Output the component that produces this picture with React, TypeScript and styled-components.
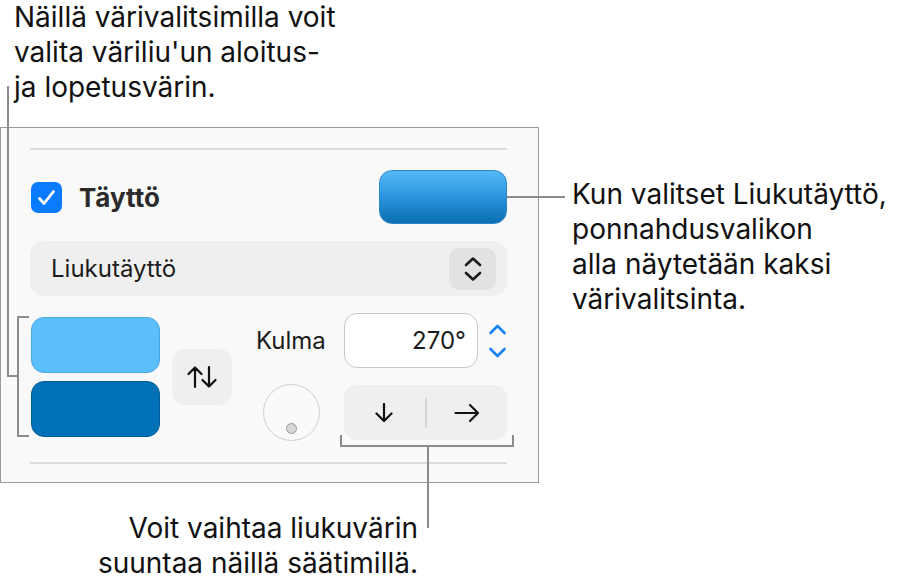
import type { ReactElement } from "react";
import styled, { createGlobalStyle } from "styled-components";

const LEADER = "#8c8c8c";

const GlobalStyle = createGlobalStyle`
  html, body {
    margin: 0;
    padding: 0;
    background: #ffffff;
  }
  body {
    font-family: Inter, "Liberation Sans", sans-serif;
    color: #111111;
  }
`;

export default function App(): ReactElement {
  return (
    <Page>
      <GlobalStyle />
      <TopNote>
        Näillä värivalitsimilla voit
        <br />
        valita väriliu'un aloitus-
        <br />
        ja lopetusvärin.
      </TopNote>
      <MainRow>
        <Panel>
          <Separator />
          <FillRow>
            <CheckLabel>
              <Checkbox>
                <svg width="31" height="31" viewBox="0 0 31 31">
                  <path
                    d="M8.5 16.5 L13 21.5 L22.5 9.5"
                    fill="none"
                    stroke="#ffffff"
                    strokeWidth="2.8"
                    strokeLinecap="round"
                    strokeLinejoin="round"
                  />
                </svg>
              </Checkbox>
              <FillTitle>Täyttö</FillTitle>
            </CheckLabel>
            <GradientSwatch />
          </FillRow>
          <Popup>
            <PopupText>Liukutäyttö</PopupText>
            <PopupStepper>
              <svg width="20" height="28" viewBox="0 0 20 28">
                <path
                  d="M3 10 L10 3.5 L17 10 M3 18 L10 24.5 L17 18"
                  fill="none"
                  stroke="#1c1c1c"
                  strokeWidth="2.6"
                  strokeLinecap="round"
                  strokeLinejoin="round"
                />
              </svg>
            </PopupStepper>
          </Popup>
          <Controls>
            <Wells>
              <Well $fill="#5bbffd" $edge="#48a7e2" />
              <Well $fill="#0071b6" $edge="#005c96" />
            </Wells>
            <SwapButton>
              <svg width="30" height="24" viewBox="0 0 30 24">
                <path
                  d="M8 22 V2.5 M1.5 9 L8 2.5 L14.5 9 M22 2 V21.5 M15.5 15 L22 21.5 L28.5 15"
                  fill="none"
                  stroke="#111111"
                  strokeWidth="2.2"
                  strokeLinecap="round"
                  strokeLinejoin="round"
                />
              </svg>
            </SwapButton>
            <AngleGrid>
              <AngleLabel>Kulma</AngleLabel>
              <AngleField>
                <AngleInput>270°</AngleInput>
                <BlueStepper>
                  <svg width="19" height="36" viewBox="0 0 19 36">
                    <path
                      d="M2.5 10 L9.5 3 L16.5 10 M2.5 26 L9.5 33 L16.5 26"
                      fill="none"
                      stroke="#1a82f7"
                      strokeWidth="2.6"
                      strokeLinecap="round"
                      strokeLinejoin="round"
                    />
                  </svg>
                </BlueStepper>
              </AngleField>
              <Knob>
                <KnobDot />
              </Knob>
              <Segmented>
                <Segment>
                  <svg width="22" height="20" viewBox="0 0 22 20">
                    <path
                      d="M11 1 V18 M3.5 10.5 L11 18 L18.5 10.5"
                      fill="none"
                      stroke="#111111"
                      strokeWidth="2.2"
                      strokeLinecap="round"
                      strokeLinejoin="round"
                    />
                  </svg>
                </Segment>
                <SegmentDivider />
                <Segment>
                  <svg width="26" height="20" viewBox="0 0 26 20">
                    <path
                      d="M1.5 10 H24 M16 2 L24 10 L16 18"
                      fill="none"
                      stroke="#111111"
                      strokeWidth="2.2"
                      strokeLinecap="round"
                      strokeLinejoin="round"
                    />
                  </svg>
                </Segment>
              </Segmented>
            </AngleGrid>
          </Controls>
          <Separator $gap={22} />
        </Panel>
        <SideNote>
          Kun valitset Liukutäyttö,
          <br />
          ponnahdusvalikon
          <br />
          alla näytetään kaksi
          <br />
          värivalitsinta.
        </SideNote>
      </MainRow>
      <BottomNote>
        Voit vaihtaa liukuvärin
        <br />
        suuntaa näillä säätimillä.
      </BottomNote>

      {/* leader lines and brackets */}
      <Leader style={{ left: 7, top: 86, width: 2, height: 291 }} />
      <Leader style={{ left: 7, top: 375, width: 12, height: 2 }} />
      <Leader style={{ left: 17, top: 316, width: 2, height: 121 }} />
      <Leader style={{ left: 17, top: 316, width: 12, height: 2 }} />
      <Leader style={{ left: 17, top: 435, width: 12, height: 2 }} />
      <Leader style={{ left: 507, top: 196, width: 58, height: 2 }} />
      <Leader style={{ left: 340, top: 445, width: 174, height: 2 }} />
      <Leader style={{ left: 340, top: 435, width: 2, height: 12 }} />
      <Leader style={{ left: 512, top: 435, width: 2, height: 12 }} />
      <Leader style={{ left: 427, top: 446, width: 2, height: 82 }} />
    </Page>
  );
}

const Page = styled.div`
  position: relative;
  width: 897px;
  height: 587px;
  overflow: hidden;
  background: #ffffff;
`;

const Note = styled.div`
  font-size: 28px;
  line-height: 35px;
  color: #111111;
`;

const TopNote = styled(Note)`
  margin-left: 14px;
`;

const MainRow = styled.div`
  display: flex;
  align-items: flex-start;
  margin-top: 22px;
`;

const Panel = styled.div`
  box-sizing: border-box;
  width: 539px;
  border: 1.5px solid #9a9a9a;
  background: #f9f9f9;
  padding: 20px 31px 18px 29px;
  display: flex;
  flex-direction: column;
`;

const Separator = styled.div<{ $gap?: number }>`
  height: 2px;
  margin-top: ${(p) => p.$gap ?? 0}px;
  background: #dcdcdc;
`;

const FillRow = styled.div`
  display: flex;
  align-items: center;
  justify-content: space-between;
  margin-top: 20px;
`;

const CheckLabel = styled.div`
  display: flex;
  align-items: center;
  gap: 17px;
  padding-left: 1px;
`;

const Checkbox = styled.div`
  width: 31px;
  height: 31px;
  border-radius: 7px;
  background: #0a7aff;
  display: flex;
  align-items: center;
  justify-content: center;
`;

const FillTitle = styled.span`
  font-size: 26px;
  font-weight: 700;
  color: #2b2b2b;
`;

const GradientSwatch = styled.div`
  box-sizing: border-box;
  width: 128px;
  height: 54px;
  border-radius: 13px;
  border: 1px solid #2d86c6;
  background: linear-gradient(180deg, #55b9f8 0%, #2a94dc 50%, #0a6fb2 100%);
`;

const Popup = styled.div`
  height: 55px;
  margin-top: 17px;
  border-radius: 14px;
  background: #efefef;
  display: flex;
  align-items: center;
  justify-content: space-between;
  padding: 0 11px 0 21px;
`;

const PopupText = styled.span`
  font-size: 24px;
  color: #1c1c1c;
`;

const PopupStepper = styled.div`
  width: 47px;
  height: 42px;
  border-radius: 10px;
  background: #e2e2e2;
  display: flex;
  align-items: center;
  justify-content: center;
`;

const Controls = styled.div`
  display: flex;
  align-items: center;
  margin-top: 17px;
`;

const Wells = styled.div`
  display: flex;
  flex-direction: column;
  gap: 8px;
  margin-left: 1px;
`;

const Well = styled.div<{ $fill: string; $edge: string }>`
  box-sizing: border-box;
  width: 129px;
  height: 56px;
  border-radius: 13px;
  background: ${(p) => p.$fill};
  border: 1.5px solid ${(p) => p.$edge};
`;

const SwapButton = styled.div`
  width: 60px;
  height: 56px;
  margin-left: 12px;
  border-radius: 13px;
  background: #efefef;
  display: flex;
  align-items: center;
  justify-content: center;
`;

const AngleGrid = styled.div`
  display: grid;
  grid-template-columns: 88px 163px;
  grid-template-rows: 55px 55px;
  row-gap: 17px;
  margin-left: 24px;
  align-items: center;
`;

const AngleLabel = styled.span`
  font-size: 24px;
  color: #1c1c1c;
`;

const AngleField = styled.div`
  display: flex;
  align-items: center;
  gap: 10px;
`;

const AngleInput = styled.div`
  box-sizing: border-box;
  width: 134px;
  height: 55px;
  border: 1.5px solid #c9c9c9;
  border-radius: 13px;
  background: #ffffff;
  font-size: 24px;
  color: #1c1c1c;
  display: flex;
  align-items: center;
  justify-content: flex-end;
  padding-right: 11px;
`;

const BlueStepper = styled.div`
  display: flex;
  align-items: center;
`;

const Knob = styled.div`
  position: relative;
  box-sizing: border-box;
  width: 57px;
  height: 57px;
  margin-left: 7px;
  border-radius: 50%;
  border: 1.5px solid #d0d0d0;
  background: #fafafa;
`;

const KnobDot = styled.div`
  position: absolute;
  left: 50%;
  bottom: 6px;
  box-sizing: border-box;
  width: 11px;
  height: 11px;
  margin-left: -5.5px;
  border-radius: 50%;
  border: 1.5px solid #9a9a9a;
  background: #d6d6d6;
`;

const Segmented = styled.div`
  height: 55px;
  border-radius: 13px;
  background: #efefef;
  display: flex;
  align-items: center;
`;

const Segment = styled.div`
  flex: 1;
  display: flex;
  align-items: center;
  justify-content: center;
`;

const SegmentDivider = styled.div`
  width: 2px;
  height: 30px;
  background: #d4d4d4;
`;

const SideNote = styled(Note)`
  margin-left: 33px;
  margin-top: 50px;
`;

const BottomNote = styled(Note)`
  width: 418px;
  text-align: right;
  margin-top: 28px;
`;

const Leader = styled.div`
  position: absolute;
  background: ${LEADER};
`;
